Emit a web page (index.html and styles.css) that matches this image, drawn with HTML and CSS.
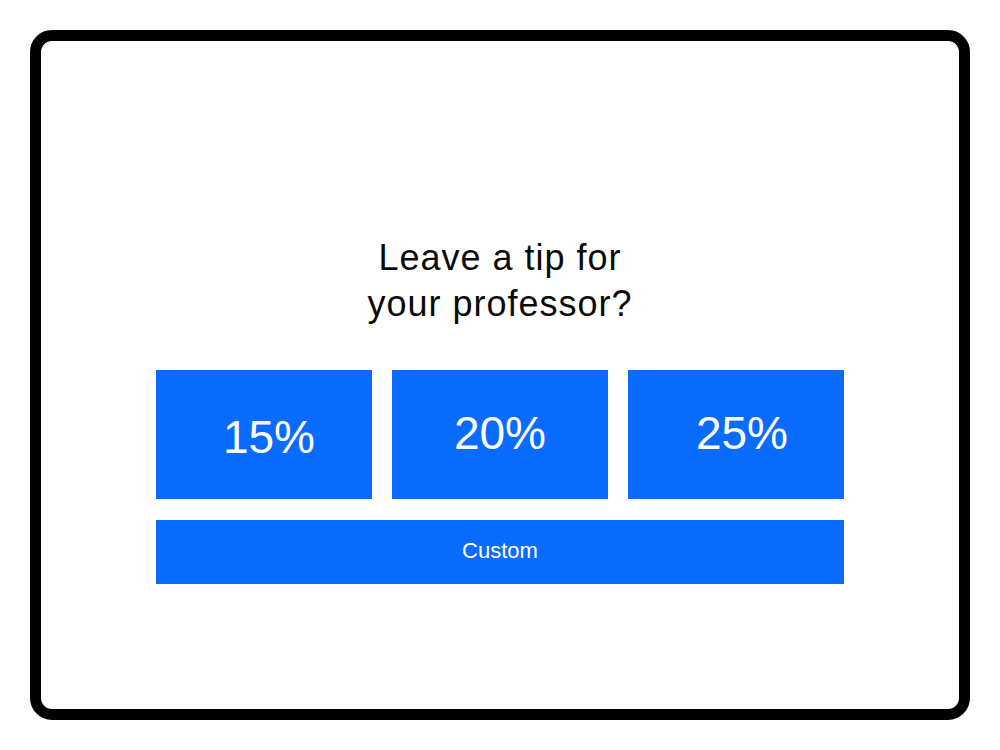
FILE: index.html
```html
<!DOCTYPE html>
<html lang="en">
<head>
<meta charset="utf-8">
<title>Tip</title>
<link rel="stylesheet" href="styles.css">
</head>
<body>
<div class="frame">
  <h1 class="title">Leave a tip for<br>your professor?</h1>
  <div class="options">
    <button class="opt opt-a">15%</button>
    <button class="opt opt-b">20%</button>
    <button class="opt opt-c">25%</button>
    <button class="custom">Custom</button>
  </div>
</div>
</body>
</html>
```
FILE: styles.css
```css
html, body {
  margin: 0;
  padding: 0;
  background: #ffffff;
}
body {
  width: 1000px;
  height: 750px;
  font-family: "Liberation Sans", Arial, sans-serif;
  padding-top: 30px;
  box-sizing: border-box;
}
.frame {
  box-sizing: border-box;
  margin-left: 30px;
  width: 940px;
  height: 690px;
  border: 11px solid #000;
  border-radius: 22px;
  padding-top: 194px;
  display: flex;
  flex-direction: column;
  align-items: center;
}
.title {
  margin: 0;
  font-size: 36px;
  line-height: 46px;
  font-weight: normal;
  letter-spacing: 1px;
  text-align: center;
  color: #0a0a0a;
}
.options {
  margin-top: 43px;
  width: 688px;
  display: grid;
  grid-template-columns: repeat(3, 1fr);
  column-gap: 20px;
  row-gap: 21px;
}
.opt, .custom {
  border: none;
  margin: 0;
  background: #0a6bff;
  color: #fff;
  font-family: "Liberation Sans", Arial, sans-serif;
  display: flex;
  align-items: center;
  justify-content: center;
}
.opt {
  height: 129px;
  font-size: 46px;
}
.opt-a { padding: 4px 0 0 10px; }
.opt-b { padding: 0 0 4px 0; }
.opt-c { padding: 0 0 3px 12px; }
.custom {
  grid-column: 1 / -1;
  height: 64px;
  font-size: 22px;
  padding: 0 0 2px 0;
}
```
